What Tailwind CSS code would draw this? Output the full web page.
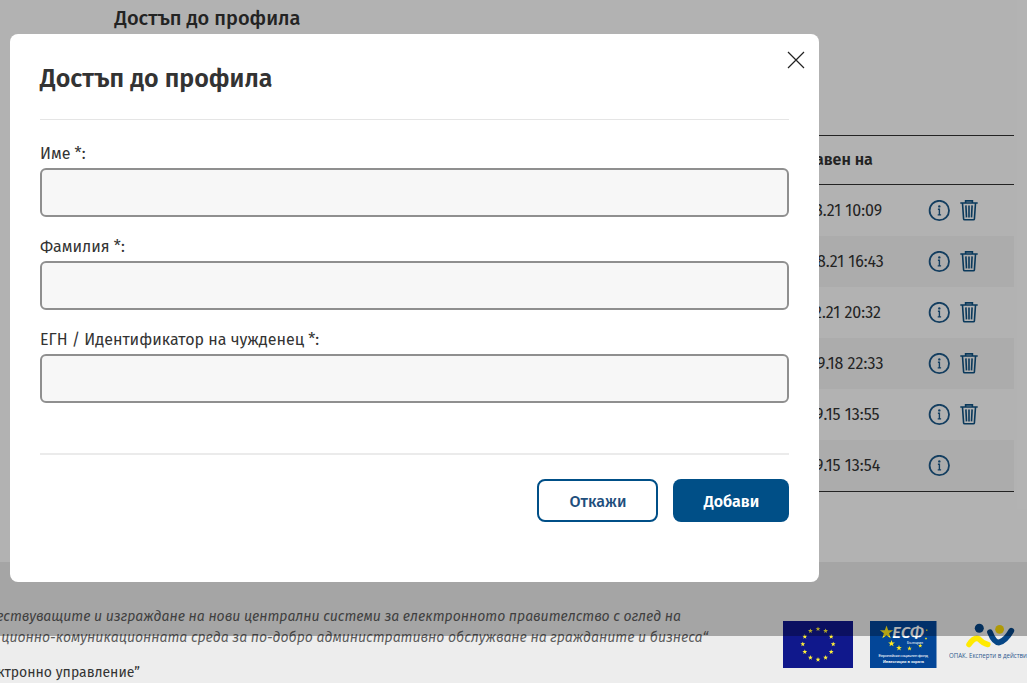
<!DOCTYPE html>
<html lang="bg">
<head>
<meta charset="utf-8">
<title>Достъп до профила</title>
<script src="https://cdn.jsdelivr.net/npm/@tailwindcss/browser@4"></script>
</head>
<body class="relative h-[683px] w-[1027px] overflow-hidden bg-white font-['Fira_Sans','Open_Sans',sans-serif] text-base text-[#333]">
<svg class="hidden">
  <symbol id="info" viewBox="0 0 22 22">
    <circle cx="11.3" cy="10.5" r="9.7" fill="none" stroke="#1d5a8a" stroke-width="1.8"/>
    <circle cx="11.3" cy="6.4" r="1.2" fill="#1d5a8a"/>
    <path d="M9.9 9.3H11.4V14.8M9.7 14.9H13.1" fill="none" stroke="#1d5a8a" stroke-width="1.4"/>
  </symbol>
  <symbol id="trash" viewBox="0 0 18 21">
    <path d="M.3 3H17.7M5.6 2.8V.9H12.4V2.8M2.5 3.2L3.6 18.9Q3.7 19.8 4.6 19.8H13.4Q14.3 19.8 14.4 18.9L15.5 3.2M5.9 5.4L6.5 17.4M9 5.4V17.4M12.1 5.4L11.5 17.4" fill="none" stroke="#0f5283" stroke-width="1.6"/>
  </symbol>
  <symbol id="star" viewBox="-10 -10 20 20">
    <path d="M0-10L2.4-3.2H9.5L3.8 1.2L5.9 8.1L0 4L-5.9 8.1L-3.8 1.2L-9.5-3.2H-2.4Z"/>
  </symbol>
</svg>

<div class="flex h-full flex-col">
  <main class="flex h-[562px] shrink-0 flex-col">
    <h2 class="mt-1 ml-[114.5px] text-xl leading-7 font-medium">Достъп до профила</h2>
    <section class="mt-[103px] mr-[13px] ml-[115px] border-y border-[#333]">
      <div class="flex h-12 items-center pl-[700px] font-semibold">авен на</div>
      <div class="border-t border-[#333]">
        <div class="flex h-[51px] items-center pl-[699px]"><span class="w-[114px]">8.21 10:09</span><svg class="size-[22px]"><use href="#info"/></svg><svg class="ml-2.5 h-[21px] w-[18px]"><use href="#trash"/></svg></div>
        <div class="flex h-[51px] items-center bg-[#f7f7f7] pl-[702px]"><span class="w-[111px]">8.21 16:43</span><svg class="size-[22px]"><use href="#info"/></svg><svg class="ml-2.5 h-[21px] w-[18px]"><use href="#trash"/></svg></div>
        <div class="flex h-[51px] items-center pl-[699px]"><span class="w-[114px]">2.21 20:32</span><svg class="size-[22px]"><use href="#info"/></svg><svg class="ml-2.5 h-[21px] w-[18px]"><use href="#trash"/></svg></div>
        <div class="flex h-[51px] items-center bg-[#f7f7f7] pl-[702px]"><span class="w-[111px]">9.18 22:33</span><svg class="size-[22px]"><use href="#info"/></svg><svg class="ml-2.5 h-[21px] w-[18px]"><use href="#trash"/></svg></div>
        <div class="flex h-[51px] items-center pl-[700px]"><span class="w-[113px]">9.15 13:55</span><svg class="size-[22px]"><use href="#info"/></svg><svg class="ml-2.5 h-[21px] w-[18px]"><use href="#trash"/></svg></div>
        <div class="flex h-[51px] items-center bg-[#f7f7f7] pl-[700px]"><span class="w-[113px]">9.15 13:54</span><svg class="size-[22px]"><use href="#info"/></svg></div>
      </div>
    </section>
  </main>

  <footer class="flex flex-1 items-start bg-[#ededed]">
    <div class="flex w-[783px] shrink-0 flex-col pt-11 text-sm leading-[21px] whitespace-nowrap">
      <div class="flex w-[681px] justify-end text-[#5c5c5c] italic">ествуващите и изграждане на нови централни системи за електронното правителство с оглед на</div>
      <div class="flex w-[708px] justify-end text-[#5c5c5c] italic">ционно-комуникационната среда за по-добро административно обслужване на гражданите и бизнеса“</div>
      <div class="mt-3.5 flex w-[140px] justify-end">ктронно управление”</div>
    </div>
    <svg class="mt-[59px] h-[47px] w-[70px] shrink-0" viewBox="0 0 70 47">
      <rect width="70" height="47" fill="#10188c"/>
      <g fill="#fff03a">
        <use href="#star" x="32.4" y="5.4" width="5.2" height="5.2"/><use href="#star" x="40" y="7.3" width="5.2" height="5.2"/><use href="#star" x="45.6" y="13" width="5.2" height="5.2"/><use href="#star" x="47.6" y="20.6" width="5.2" height="5.2"/><use href="#star" x="45.6" y="28.3" width="5.2" height="5.2"/><use href="#star" x="40" y="34" width="5.2" height="5.2"/><use href="#star" x="32.4" y="36" width="5.2" height="5.2"/><use href="#star" x="24.8" y="34" width="5.2" height="5.2"/><use href="#star" x="19.2" y="28.3" width="5.2" height="5.2"/><use href="#star" x="17.2" y="20.6" width="5.2" height="5.2"/><use href="#star" x="19.2" y="13" width="5.2" height="5.2"/><use href="#star" x="24.8" y="7.3" width="5.2" height="5.2"/>
      </g>
    </svg>
    <svg class="mt-[59px] ml-[17px] h-[47px] w-[67px] shrink-0" viewBox="0 0 67 47">
      <rect width="66.5" height="47" fill="#034698"/>
      <g fill="#ffe91f">
        <use href="#star" x="9.5" y="4.5" width="14" height="14"/><use href="#star" x="18" y="19" width="7" height="7"/><use href="#star" x="26" y="24" width="6" height="6"/><use href="#star" x="37" y="25" width="5" height="5"/><use href="#star" x="48" y="22.5" width="4.5" height="4.5"/><use href="#star" x="54.5" y="16" width="3" height="3"/><use href="#star" x="55.5" y="8" width="2.5" height="2.5"/>
      </g>
      <text x="22" y="17.2" textLength="32" lengthAdjust="spacingAndGlyphs" font-size="15.5" font-style="italic" font-weight="500" font-family="Fira Sans" fill="#fff">ЕСФ</text>
      <text x="37" y="22.6" textLength="16" font-size="3.6" font-family="Liberation Sans" fill="#fff">България</text>
      <text x="8.5" y="36.4" textLength="49.5" font-size="4.2" font-family="Liberation Sans" fill="#fff">Европейски социален фонд</text>
      <text x="13" y="41.6" textLength="41" lengthAdjust="spacingAndGlyphs" font-size="4.2" font-weight="bold" font-family="Liberation Sans" fill="#fff">Инвестиции в хората</text>
    </svg>
    <svg class="mt-[59px] ml-3 h-[47px] w-[78.5px] shrink-0" viewBox="0 0 78.5 47">
      <circle cx="30.3" cy="7.3" r="4.5" fill="#064686"/>
      <circle cx="50.6" cy="8.3" r="4.4" fill="#fbdc09"/>
      <path d="M20 23.5Q25.5 15.5 30 18Q34 22.5 38.8 23.5" fill="none" stroke="#ffea00" stroke-width="5.5" stroke-linecap="round" stroke-linejoin="round"/>
      <path d="M41 11.2Q45 21.5 50 21.5Q56.5 20 62.3 9.8" fill="none" stroke="#064686" stroke-width="5.8" stroke-linecap="round" stroke-linejoin="round"/>
      <text x="0" y="37.2" textLength="78" lengthAdjust="spacingAndGlyphs" font-size="6.8" font-family="Open Sans" fill="#2f5a8e">ОПАК. Експерти в действи</text>
    </svg>
  </footer>
</div>

<div class="absolute inset-x-0 top-0 h-[636px] bg-black/30"></div>

<div class="absolute top-[34px] left-[10px] flex h-[548px] w-[809px] flex-col rounded-lg bg-white px-[30px]">
  <svg class="absolute top-[17px] right-[14px] size-4.5" viewBox="0 0 18 18"><path d="M1 1L17 17M17 1L1 17" stroke="#222" stroke-width="1.2"/></svg>
  <h1 class="mt-[27px] text-[25px] leading-9 font-semibold">Достъп до профила</h1>
  <div class="mt-[22px] border-t border-[#e5e5e5]"></div>
  <label class="mt-[22px] flex flex-col leading-6">Име *:<input class="mt-0.5 h-[49px] rounded-md border-2 border-[#8f8f8f] bg-[#f7f7f7]"></label>
  <label class="mt-[18px] flex flex-col leading-6">Фамилия *:<input class="mt-0.5 h-[49px] rounded-md border-2 border-[#8f8f8f] bg-[#f7f7f7]"></label>
  <label class="mt-[18px] flex flex-col leading-6">ЕГН / Идентификатор на чужденец *:<input class="mt-0.5 h-[49px] rounded-md border-2 border-[#8f8f8f] bg-[#f7f7f7]"></label>
  <div class="mt-[50px] border-t-2 border-[#ebebeb]"></div>
  <div class="mt-6 flex justify-end gap-[15px]">
    <button class="h-[43px] w-[121px] rounded-lg border-2 border-[#004f87] pt-0.5 pl-px font-medium text-[#1f4f7d]">Откажи</button>
    <button class="h-[43px] w-[116px] rounded-lg bg-[#004f87] pt-0.5 pl-px font-semibold text-white">Добави</button>
  </div>
</div>
</body>
</html>
